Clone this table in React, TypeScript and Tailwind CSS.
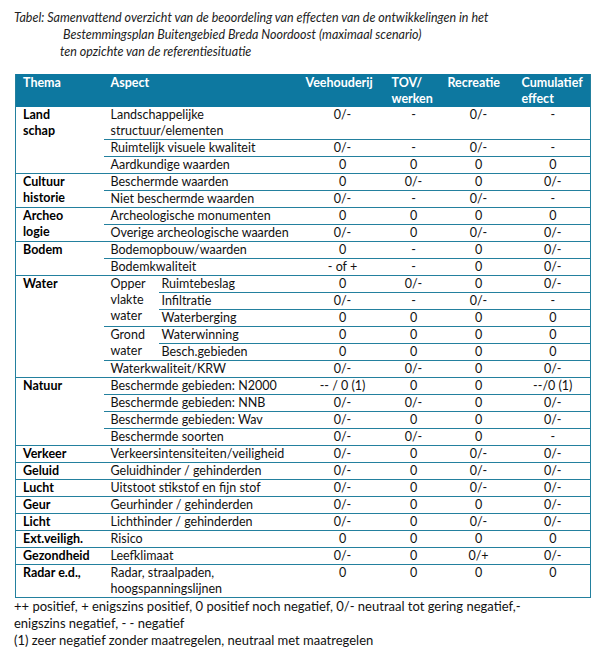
import React from "react";

const B = "border-b border-[#23809e]";
const tdT = `${B} align-top pl-[7px] font-bold text-black`;
const tdA = `${B} align-top pl-[7px]`;
const tdV = `${B} align-top text-center`;

function Vals({ v }: { v: string[] }) {
  return (
    <>
      {v.map((x, i) => (
        <td key={i} className={tdV}>
          {x}
        </td>
      ))}
    </>
  );
}

export default function App() {
  return (
    <div
      className="w-[603px] h-[650px] bg-white text-[#111] overflow-hidden"
      style={{ fontFamily: "Lato, 'Liberation Sans', sans-serif" }}
    >
      <div className="pt-[9px] text-[12.5px] leading-[17px] italic text-[#222]">
        <div className="pl-[14px]">
          Tabel: Samenvattend overzicht van de beoordeling van effecten van de ontwikkelingen in het
        </div>
        <div className="pl-[63px]">
          Bestemmingsplan Buitengebied Breda Noordoost (maximaal scenario)
        </div>
        <div className="pl-[60px]">ten opzichte van de referentiesituatie</div>
      </div>

      <table className="mt-[14px] ml-[15px] w-[575px] border-collapse table-fixed text-[12.5px] leading-[16px] border-l border-r border-[#23809e]">
        <colgroup>
          <col className="w-[88px]" />
          <col className="w-[55px]" />
          <col className="w-[141px]" />
          <col className="w-[86px]" />
          <col className="w-[56px]" />
          <col className="w-[74px]" />
          <col className="w-[75px]" />
        </colgroup>
        <thead>
          <tr className="bg-[#0d78a0] text-white font-bold h-[33px]">
            <th className="text-left align-top pl-[7px] pt-[1px] font-bold">Thema</th>
            <th className="text-left align-top pl-[7px] pt-[1px] font-bold" colSpan={2}>
              Aspect
            </th>
            <th className="text-left align-top pl-[6px] pt-[1px] font-bold">Veehouderij</th>
            <th className="text-left align-top pl-[6px] pt-[1px] font-bold">
              TOV/
              <br />
              werken
            </th>
            <th className="text-left align-top pl-[6px] pt-[1px] font-bold">Recreatie</th>
            <th className="text-left align-top pl-[6px] pt-[1px] font-bold">
              Cumulatief
              <br />
              effect
            </th>
          </tr>
        </thead>
        <tbody>
          <tr>
            <td className={tdT} rowSpan={3}>
              Land
              <br />
              schap
            </td>
            <td className={tdA} colSpan={2}>
              Landschappelijke
              <br />
              structuur/elementen
            </td>
            <Vals v={["0/-", "-", "0/-", "-"]} />
          </tr>
          <tr>
            <td className={tdA} colSpan={2}>Ruimtelijk visuele kwaliteit</td>
            <Vals v={["0/-", "-", "0/-", "-"]} />
          </tr>
          <tr>
            <td className={tdA} colSpan={2}>Aardkundige waarden</td>
            <Vals v={["0", "0", "0", "0"]} />
          </tr>

          <tr>
            <td className={tdT} rowSpan={2}>
              Cultuur
              <br />
              historie
            </td>
            <td className={tdA} colSpan={2}>Beschermde waarden</td>
            <Vals v={["0", "0/-", "0", "0/-"]} />
          </tr>
          <tr>
            <td className={tdA} colSpan={2}>Niet beschermde waarden</td>
            <Vals v={["0/-", "-", "0/-", "-"]} />
          </tr>

          <tr>
            <td className={tdT} rowSpan={2}>
              Archeo
              <br />
              logie
            </td>
            <td className={tdA} colSpan={2}>Archeologische monumenten</td>
            <Vals v={["0", "0", "0", "0"]} />
          </tr>
          <tr>
            <td className={tdA} colSpan={2}>Overige archeologische waarden</td>
            <Vals v={["0/-", "0", "0/-", "0/-"]} />
          </tr>

          <tr>
            <td className={tdT} rowSpan={2}>Bodem</td>
            <td className={tdA} colSpan={2}>Bodemopbouw/waarden</td>
            <Vals v={["0", "-", "0", "0/-"]} />
          </tr>
          <tr>
            <td className={tdA} colSpan={2}>Bodemkwaliteit</td>
            <Vals v={["- of +", "-", "0", "0/-"]} />
          </tr>

          <tr>
            <td className={tdT} rowSpan={6}>Water</td>
            <td className={tdA} rowSpan={3}>
              Opper
              <br />
              vlakte
              <br />
              water
            </td>
            <td className={`${B} align-top pl-[3px]`}>Ruimtebeslag</td>
            <Vals v={["0", "0/-", "0", "0/-"]} />
          </tr>
          <tr>
            <td className={`${B} align-top pl-[3px]`}>Infiltratie</td>
            <Vals v={["0/-", "-", "0/-", "-"]} />
          </tr>
          <tr>
            <td className={`${B} align-top pl-[3px]`}>Waterberging</td>
            <Vals v={["0", "0", "0", "0"]} />
          </tr>
          <tr>
            <td className={tdA} rowSpan={2}>
              Grond
              <br />
              water
            </td>
            <td className={`${B} align-top pl-[3px]`}>Waterwinning</td>
            <Vals v={["0", "0", "0", "0"]} />
          </tr>
          <tr>
            <td className={`${B} align-top pl-[3px]`}>Besch.gebieden</td>
            <Vals v={["0", "0", "0", "0"]} />
          </tr>
          <tr>
            <td className={tdA} colSpan={2}>Waterkwaliteit/KRW</td>
            <Vals v={["0/-", "0/-", "0", "0/-"]} />
          </tr>

          <tr>
            <td className={tdT} rowSpan={4}>Natuur</td>
            <td className={tdA} colSpan={2}>Beschermde gebieden: N2000</td>
            <Vals v={["-- / 0 (1)", "0", "0", "--/0 (1)"]} />
          </tr>
          <tr>
            <td className={tdA} colSpan={2}>Beschermde gebieden: NNB</td>
            <Vals v={["0/-", "0/-", "0", "0/-"]} />
          </tr>
          <tr>
            <td className={tdA} colSpan={2}>Beschermde gebieden: Wav</td>
            <Vals v={["0/-", "0", "0", "0/-"]} />
          </tr>
          <tr>
            <td className={tdA} colSpan={2}>Beschermde soorten</td>
            <Vals v={["0/-", "0/-", "0", "-"]} />
          </tr>

          <tr>
            <td className={tdT}>Verkeer</td>
            <td className={tdA} colSpan={2}>Verkeersintensiteiten/veiligheid</td>
            <Vals v={["0/-", "0", "0/-", "0/-"]} />
          </tr>
          <tr>
            <td className={tdT}>Geluid</td>
            <td className={tdA} colSpan={2}>Geluidhinder / gehinderden</td>
            <Vals v={["0/-", "0", "0/-", "0/-"]} />
          </tr>
          <tr>
            <td className={tdT}>Lucht</td>
            <td className={tdA} colSpan={2}>Uitstoot stikstof en fijn stof</td>
            <Vals v={["0/-", "0", "0/-", "0/-"]} />
          </tr>
          <tr>
            <td className={tdT}>Geur</td>
            <td className={tdA} colSpan={2}>Geurhinder / gehinderden</td>
            <Vals v={["0/-", "0", "0", "0/-"]} />
          </tr>
          <tr>
            <td className={tdT}>Licht</td>
            <td className={tdA} colSpan={2}>Lichthinder / gehinderden</td>
            <Vals v={["0/-", "0", "0/-", "0/-"]} />
          </tr>
          <tr>
            <td className={tdT}>Ext.veiligh.</td>
            <td className={tdA} colSpan={2}>Risico</td>
            <Vals v={["0", "0", "0", "0"]} />
          </tr>
          <tr>
            <td className={tdT}>Gezondheid</td>
            <td className={tdA} colSpan={2}>Leefklimaat</td>
            <Vals v={["0/-", "0", "0/+", "0/-"]} />
          </tr>
          <tr>
            <td className={tdT}>Radar e.d.,</td>
            <td className={tdA} colSpan={2}>
              Radar, straalpaden,
              <br />
              hoogspanningslijnen
            </td>
            <Vals v={["0", "0", "0", "0"]} />
          </tr>
        </tbody>
      </table>

      <div className="pl-[14px] text-[13px] leading-[17px] text-[#111]">
        <div>
          ++ positief, + enigszins positief, 0 positief noch negatief, 0/- neutraal tot gering negatief,-
        </div>
        <div>enigszins negatief, - - negatief</div>
        <div>(1) zeer negatief zonder maatregelen, neutraal met maatregelen</div>
      </div>
    </div>
  );
}
